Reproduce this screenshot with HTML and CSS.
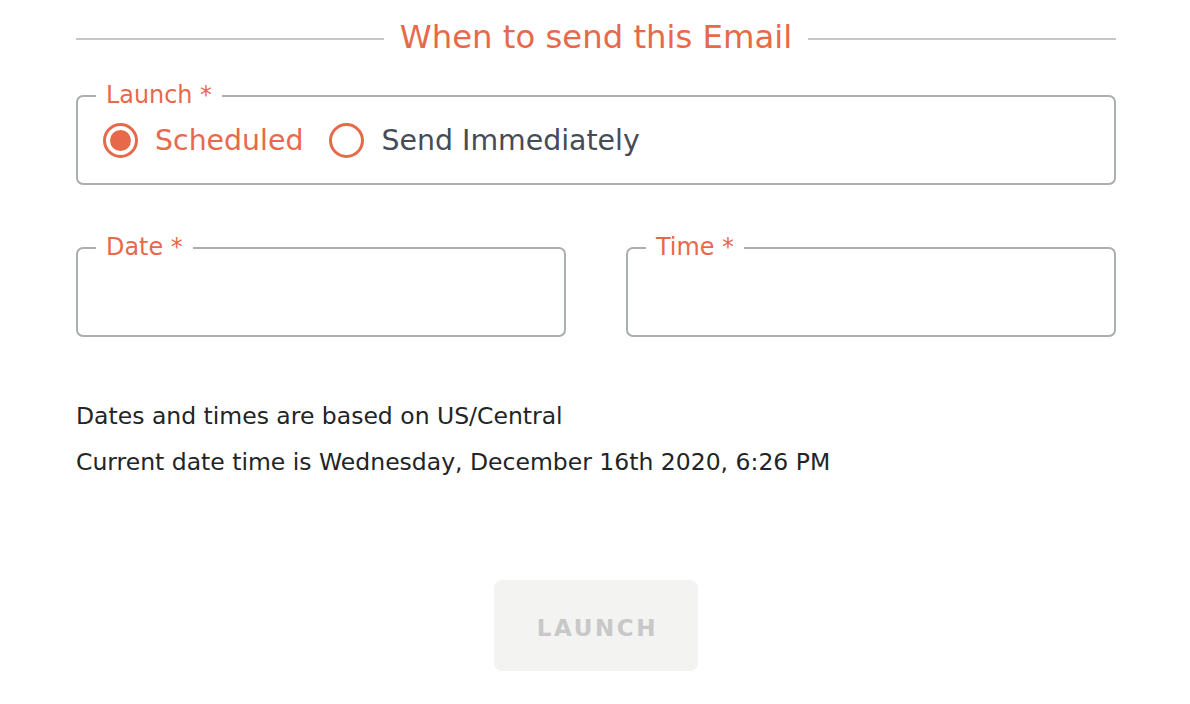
FILE: index.html
```html
<!DOCTYPE html>
<html lang="en">
<head>
<meta charset="utf-8">
<title>When to send this Email</title>
<link rel="stylesheet" href="styles.css">
</head>
<body>
<main class="page">
  <div class="section-title">
    <span class="rule"></span>
    <h2 class="title">When to send this Email</h2>
    <span class="rule"></span>
  </div>

  <div class="box launch-box">
    <span class="box-label">Launch *</span>
    <div class="radios">
      <label class="radio checked">
        <span class="radio-circle"><span class="radio-dot"></span></span>
        <span class="radio-text">Scheduled</span>
      </label>
      <label class="radio">
        <span class="radio-circle"></span>
        <span class="radio-text">Send Immediately</span>
      </label>
    </div>
  </div>

  <div class="row">
    <div class="box field-box">
      <span class="box-label">Date *</span>
    </div>
    <div class="box field-box">
      <span class="box-label">Time *</span>
    </div>
  </div>

  <div class="notes">
    <p class="note">Dates and times are based on US/Central</p>
    <p class="note">Current date time is Wednesday, December 16th 2020, 6:26 PM</p>
  </div>

  <div class="actions">
    <button class="launch-btn" type="button" disabled>LAUNCH</button>
  </div>
</main>
</body>
</html>
```
FILE: styles.css
```css
* { box-sizing: border-box; }

html, body {
  margin: 0;
  padding: 0;
  background: #ffffff;
}

body {
  font-family: "DejaVu Sans", "Open Sans", sans-serif;
  color: #222426;
}

.page {
  width: 1040px;
  margin-left: 76px;
  padding-top: 18px;
}

.section-title {
  display: flex;
  align-items: center;
  gap: 16px;
  height: 38px;
}

.rule {
  flex: 1;
  height: 2px;
  background: #c8c8c8;
  margin-top: 4px;
}

.title {
  margin: 0;
  font-weight: normal;
  font-size: 32.3px;
  line-height: 38px;
  color: #e7694a;
  white-space: nowrap;
}

.box {
  position: relative;
  border: 2px solid #abaeae;
  border-radius: 7px;
  height: 90px;
}

.launch-box {
  margin-top: 39px;
  display: flex;
  align-items: center;
  padding-left: 25px;
}

.box-label {
  position: absolute;
  top: -16px;
  left: 18px;
  padding: 0 10px;
  background: #ffffff;
  font-size: 23.9px;
  line-height: 28px;
  color: #e7694a;
  white-space: nowrap;
}

.radios {
  display: flex;
  align-items: center;
  gap: 26px;
}

.radio {
  display: flex;
  align-items: center;
  gap: 17px;
}

.radio-circle {
  width: 35px;
  height: 35px;
  border: 3px solid #e7694a;
  border-radius: 50%;
  display: flex;
  align-items: center;
  justify-content: center;
}

.radio-dot {
  width: 21px;
  height: 21px;
  border-radius: 50%;
  background: #e7694a;
}

.radio-text {
  font-size: 28.4px;
  color: #454c56;
  white-space: nowrap;
}

.radio.checked .radio-text {
  color: #e7694a;
}

.row {
  margin-top: 62px;
  display: grid;
  grid-template-columns: 1fr 1fr;
  gap: 60px;
}

.notes {
  margin-top: 65px;
  display: flex;
  flex-direction: column;
  gap: 18px;
}

.note {
  margin: 0;
  font-size: 23.5px;
  line-height: 28px;
  color: #222426;
  white-space: nowrap;
}

.actions {
  margin-top: 104px;
  display: flex;
  justify-content: center;
}

.launch-btn {
  width: 204px;
  height: 91px;
  border: none;
  border-radius: 8px;
  background: #f3f3f2;
  font-family: "DejaVu Sans", "Open Sans", sans-serif;
  font-weight: bold;
  font-size: 23px;
  letter-spacing: 2.6px;
  padding: 4px 0 0 3px;
  color: #c8c8c8;
}
```
